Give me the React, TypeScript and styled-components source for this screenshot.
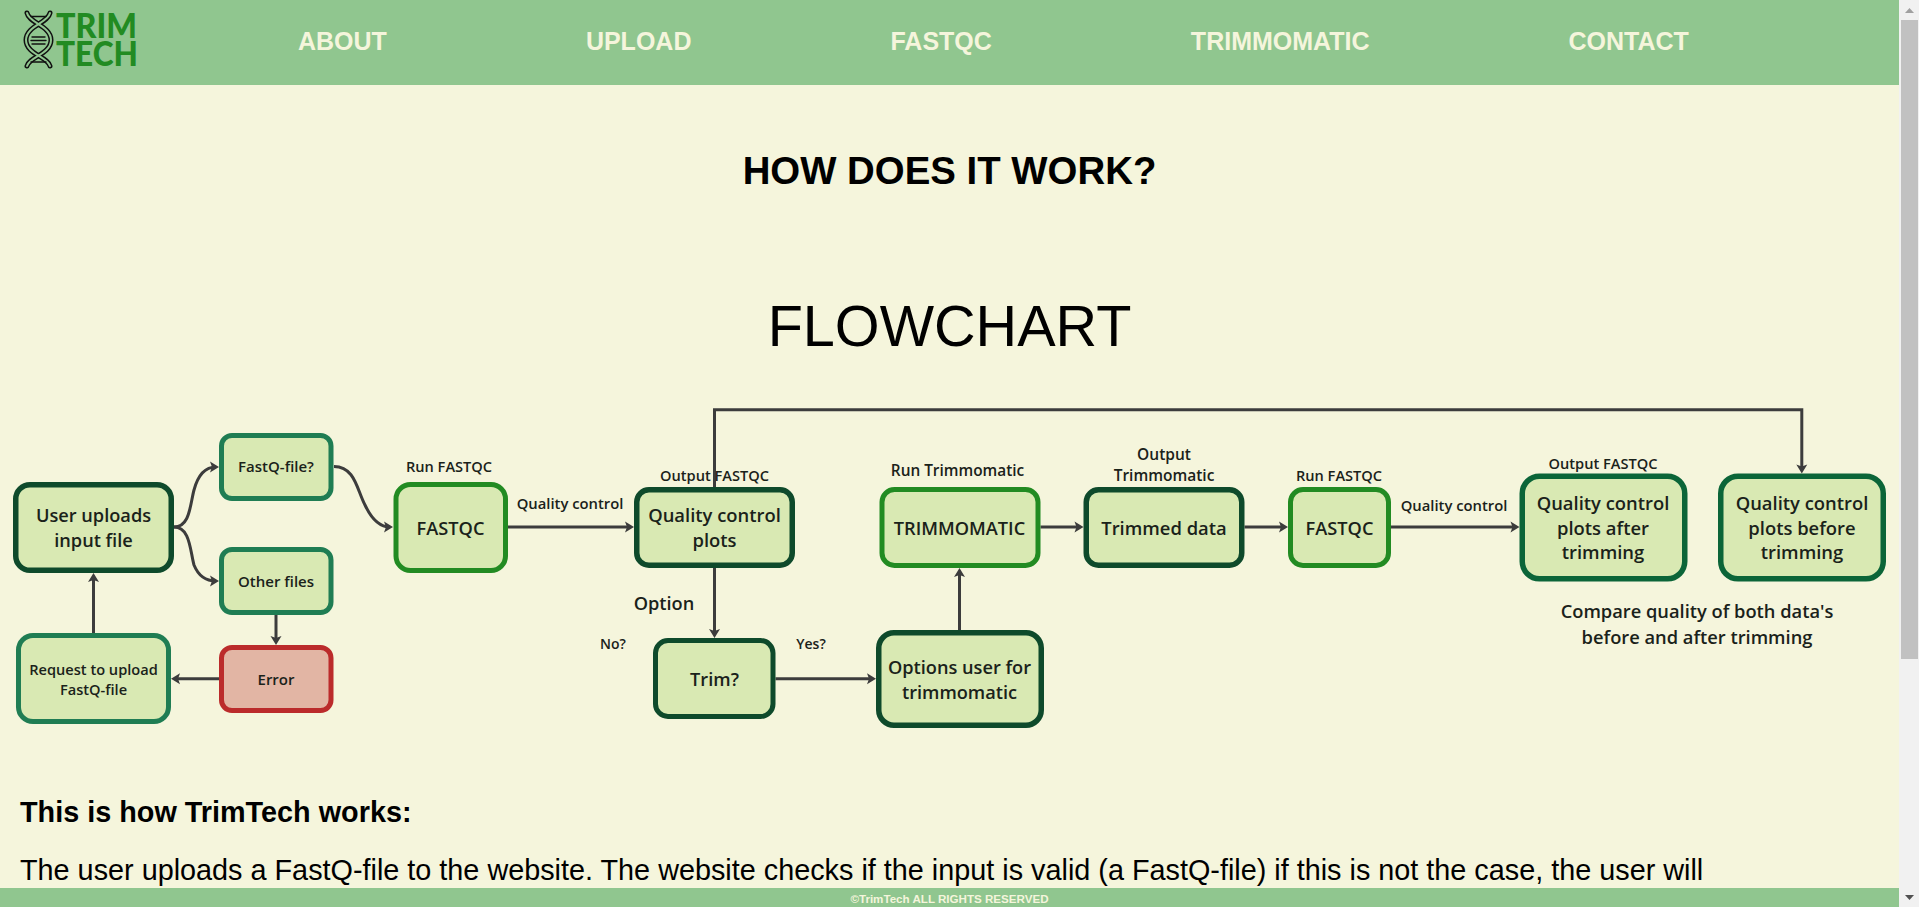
import React from "react";
import styled, { createGlobalStyle } from "styled-components";

const GlobalStyle = createGlobalStyle`
  html, body { height: 100%; overflow: hidden; }
  body { margin: 0; background: #f5f5dc; font-family: "Liberation Sans", Arial, sans-serif; color: #000; }
`;

const Shell = styled.div`
  display: grid;
  grid-template-columns: 1fr 20px;
  height: 100vh;
`;

const Page = styled.div`
  display: flex;
  flex-direction: column;
  min-width: 0;
  height: 100vh;
`;

const TopBar = styled.header`
  flex: none;
  height: 85px;
  background: #90c68f;
  display: flex;
  align-items: center;
`;

const LogoMark = styled.svg`
  width: 140px;
  height: 80px;
  margin: 0 0 5px 10px;
  flex: none;
`;

const LogoWord = styled.text`
  font-family: "Lato", sans-serif;
  font-weight: 900;
  font-size: 34.500px;
  fill: #228b22;
`;

const Nav = styled.nav`
  display: flex;
  gap: 199px;
  margin-left: 148px;
  padding-bottom: 3px;
`;

const NavLink = styled.a`
  font-size: 25px;
  font-weight: 700;
  color: #f5f5dc;
  text-decoration: none;
  white-space: nowrap;
`;

const Main = styled.main`
  flex: 1;
  min-height: 0;
  overflow: hidden;
  padding-top: 64px;
`;

const Title = styled.h2`
  margin: 0;
  font-size: 38.400px;
  line-height: 44px;
  font-weight: 700;
  text-align: center;
`;

const ChartTitle = styled.h1`
  margin: 100px 0 41px;
  font-size: 57.600px;
  line-height: 66px;
  font-weight: 400;
  text-align: center;
`;

const Chart = styled.svg`
  display: block;
  width: 1899px;
  height: 340px;
`;

const Box = styled.rect<{ $tone: string }>`
  fill: ${(p) => (p.$tone === "red" ? "#e2b5a4" : "#d9e9b3")};
  stroke: ${(p) =>
    ({ dark: "#0e4a2b", teal: "#1f7d53", bright: "#228b22", red: "#bb2b2b", deep: "#0b6538" } as Record<string, string>)[p.$tone]};
`;

const Label = styled.text<{ $size: number }>`
  font-family: "Open Sans", sans-serif;
  font-weight: 600;
  font-size: ${(p) => p.$size}px;
  fill: #1a221a;
  text-anchor: middle;
  dominant-baseline: central;
`;

const Line = styled.path`
  fill: none;
  stroke: #3c3c3c;
  stroke-width: 3;
`;

const Head = styled.path`
  fill: #3c3c3c;
`;

const Section = styled.section`
  padding: 0 20px;
`;

const SubTitle = styled.h3`
  margin: 56px 0 0;
  font-size: 28.800px;
  line-height: 32px;
  font-weight: 700;
`;

const Body = styled.p`
  margin: 26px 0 0;
  font-size: 28.800px;
  line-height: 32px;
`;

const Foot = styled.footer`
  flex: none;
  height: 19px;
  line-height: 21px;
  background: #90c68f;
  color: #f5f5dc;
  font-size: 11.600px;
  font-weight: 700;
  text-align: center;
`;

const ScrollRail = styled.div`
  display: flex;
  flex-direction: column;
  height: 100vh;
  background: #f1f1f1;
`;

const ScrollButton = styled.svg`
  flex: none;
  width: 20px;
  height: 20px;
  display: block;
`;

const ScrollThumb = styled.div`
  flex: none;
  height: 639px;
  margin: 0 1px 0 2px;
  background: #c1c1c1;
`;

const ScrollGap = styled.div`
  flex: 1;
`;

type BoxSpec = { x: number; y: number; w: number; h: number; tone: string; b: number; r: number };

const boxes: BoxSpec[] = [
  { x: 13, y: 482, w: 161, h: 91, tone: "dark", b: 5.5, r: 17 },
  { x: 219, y: 433, w: 114.5, h: 68, tone: "teal", b: 5, r: 13 },
  { x: 219, y: 547, w: 114.5, h: 68, tone: "teal", b: 5, r: 13 },
  { x: 219, y: 645, w: 114.5, h: 68, tone: "red", b: 5, r: 13 },
  { x: 16, y: 633, w: 155, h: 91, tone: "teal", b: 5, r: 17 },
  { x: 393.5, y: 482, w: 114.5, h: 91, tone: "bright", b: 5, r: 17 },
  { x: 634, y: 487, w: 161, h: 81, tone: "dark", b: 5.5, r: 15 },
  { x: 653, y: 638, w: 122.5, h: 81, tone: "dark", b: 5, r: 15 },
  { x: 876, y: 630, w: 168, h: 98, tone: "dark", b: 5.5, r: 18 },
  { x: 879.5, y: 487, w: 161, h: 81, tone: "bright", b: 5, r: 15 },
  { x: 1083.5, y: 487, w: 161, h: 81, tone: "dark", b: 5.5, r: 15 },
  { x: 1288, y: 487, w: 103, h: 81, tone: "bright", b: 5, r: 15 },
  { x: 1519.5, y: 473.5, w: 168, h: 108, tone: "deep", b: 5.5, r: 20 },
  { x: 1718, y: 473.5, w: 168, h: 108, tone: "deep", b: 5.5, r: 20 },
];

const labels: [string, number, number, number][] = [
  ["User uploads", 93.5, 516, 18.2],
  ["input file", 93.5, 540.5, 18.2],
  ["FastQ-file?", 276, 467, 15],
  ["Other files", 276, 581.5, 15],
  ["Error", 276, 679.5, 15],
  ["Request to upload", 93.5, 669.5, 14.6],
  ["FastQ-file", 93.5, 689.5, 14.6],
  ["Run FASTQC", 449, 467, 14.6],
  ["FASTQC", 450.5, 528.5, 18.2],
  ["Quality control", 570, 503.5, 14.8],
  ["Output FASTQC", 714.5, 476, 14.6],
  ["Quality control", 714.5, 515.5, 18.4],
  ["plots", 714.5, 540.5, 18.4],
  ["Option", 664, 603.5, 18.2],
  ["No?", 613, 644, 14],
  ["Yes?", 811, 644, 14],
  ["Trim?", 714.5, 679.5, 18.2],
  ["Options user for", 959.5, 668, 18.2],
  ["trimmomatic", 959.5, 693, 18.2],
  ["Run Trimmomatic", 957.5, 471.5, 15.4],
  ["TRIMMOMATIC", 959.5, 528.5, 18.2],
  ["Output", 1164, 454.5, 15.5],
  ["Trimmomatic", 1164, 476, 15.5],
  ["Trimmed data", 1164, 528.5, 18.4],
  ["Run FASTQC", 1339, 476, 14.6],
  ["FASTQC", 1339.5, 528.5, 18.2],
  ["Quality control", 1454, 506, 14.8],
  ["Output FASTQC", 1603, 463.5, 14.6],
  ["Quality control", 1603, 503.5, 18.4],
  ["plots after", 1603, 528, 18.4],
  ["trimming", 1603, 552.5, 18.4],
  ["Quality control", 1802, 503.5, 18.4],
  ["plots before", 1802, 528, 18.4],
  ["trimming", 1802, 552.5, 18.4],
  ["Compare quality of both data's", 1697, 611.5, 18.3],
  ["before and after trimming", 1697, 637, 18.3],
];

const lines = [
  "M174 527 C190 527 190 505 194 490 C198 475 205 467 216 467",
  "M174 527 C190 527 190 550 194 565 C198 575 205 581 216 581",
  "M334 466.5 C355 466.5 357 490 365 505 C372 520 380 527 390 527",
  "M508 527 H630",
  "M276 615 V641",
  "M219 678.7 H175",
  "M93.5 633 V577",
  "M714.5 487 V409.7 H1801.8 V470",
  "M714.5 568 V634",
  "M775.5 678.7 H872",
  "M959.5 630 V572",
  "M1040.5 527 H1080",
  "M1244.5 527 H1284",
  "M1391 527 H1516",
];

const right = (x: number, y: number) => `M${x} ${y}l-9 -5.5 2 5.5 -2 5.5z`;
const left = (x: number, y: number) => `M${x} ${y}l9 -5.5 -2 5.5 2 5.5z`;
const down = (x: number, y: number) => `M${x} ${y}l-5.5 -9 5.5 2 5.5 -2z`;
const up = (x: number, y: number) => `M${x} ${y}l-5.5 9 5.5 -2 5.5 2z`;

const heads = [
  right(219, 467),
  right(219, 581),
  right(393, 527),
  right(634, 527),
  down(276, 645),
  left(171, 678.7),
  up(93.5, 573),
  down(714.5, 638),
  right(876, 678.7),
  up(959.5, 568),
  right(1083.5, 527),
  right(1288, 527),
  right(1519.5, 527),
  down(1801.8, 473.5),
];

const navItems = ["ABOUT", "UPLOAD", "FASTQC", "TRIMMOMATIC", "CONTACT"];

const Logo = () => (
  <LogoMark viewBox="10 0 140 80" aria-label="TrimTech logo">
    <g fill="none" strokeLinecap="round">
      <path d="M27 13C29 23 51 26 51 40C51 54 29 57 27 66" stroke="#111" strokeWidth="5" />
      <path d="M50 13C48 23 26 26 26 40C26 54 48 57 50 66" stroke="#111" strokeWidth="5" />
      <path d="M27 13C29 23 51 26 51 40C51 54 29 57 27 66" stroke="#90c68f" strokeWidth="2" />
      <path d="M50 13C48 23 26 26 26 40C26 54 48 57 50 66" stroke="#90c68f" strokeWidth="2" />
      <path d="M31 16.5H46M32 37H45M31 40.5H46M32 44H45M31 62H46" stroke="#111" strokeWidth="1.4" />
    </g>
    <LogoWord x="56" y="38" textLength="81" lengthAdjust="spacingAndGlyphs">TRIM</LogoWord>
    <LogoWord x="56" y="65.5" textLength="82" lengthAdjust="spacingAndGlyphs">TECH</LogoWord>
  </LogoMark>
);

export default function App() {
  return (
    <Shell>
      <GlobalStyle />
      <Page>
        <TopBar>
          <Logo />
          <Nav>
            {navItems.map((n) => (
              <NavLink key={n} href="#">
                {n}
              </NavLink>
            ))}
          </Nav>
        </TopBar>
        <Main>
          <Title>HOW DOES IT WORK?</Title>
          <ChartTitle>FLOWCHART</ChartTitle>
          <Chart viewBox="0 400 1899 340">
            {lines.map((d) => (
              <Line key={d} d={d} />
            ))}
            {heads.map((d) => (
              <Head key={d} d={d} />
            ))}
            {boxes.map((b) => (
              <Box
                key={`${b.x}-${b.y}`}
                $tone={b.tone}
                x={b.x + b.b / 2}
                y={b.y + b.b / 2}
                width={b.w - b.b}
                height={b.h - b.b}
                rx={b.r - b.b / 2}
                strokeWidth={b.b}
              />
            ))}
            {labels.map(([t, x, y, s]) => (
              <Label key={`${t}-${x}-${y}`} x={x} y={y} dy={-1} $size={s}>
                {t}
              </Label>
            ))}
          </Chart>
          <Section>
            <SubTitle>This is how TrimTech works:</SubTitle>
            <Body>
              The user uploads a FastQ-file to the website. The website checks if the input is valid (a FastQ-file) if this
              is not the case, the user will
            </Body>
          </Section>
        </Main>
        <Foot>©TrimTech ALL RIGHTS RESERVED</Foot>
      </Page>
      <ScrollRail aria-hidden="true">
        <ScrollButton viewBox="0 0 20 20">
          <path d="M10.5 8l4.500 5h-9z" fill="#a0a0a0" />
        </ScrollButton>
        <ScrollThumb />
        <ScrollGap />
        <ScrollButton viewBox="0 0 20 20">
          <path d="M10.5 13l-4.500-5h9z" fill="#505050" />
        </ScrollButton>
      </ScrollRail>
    </Shell>
  );
}
